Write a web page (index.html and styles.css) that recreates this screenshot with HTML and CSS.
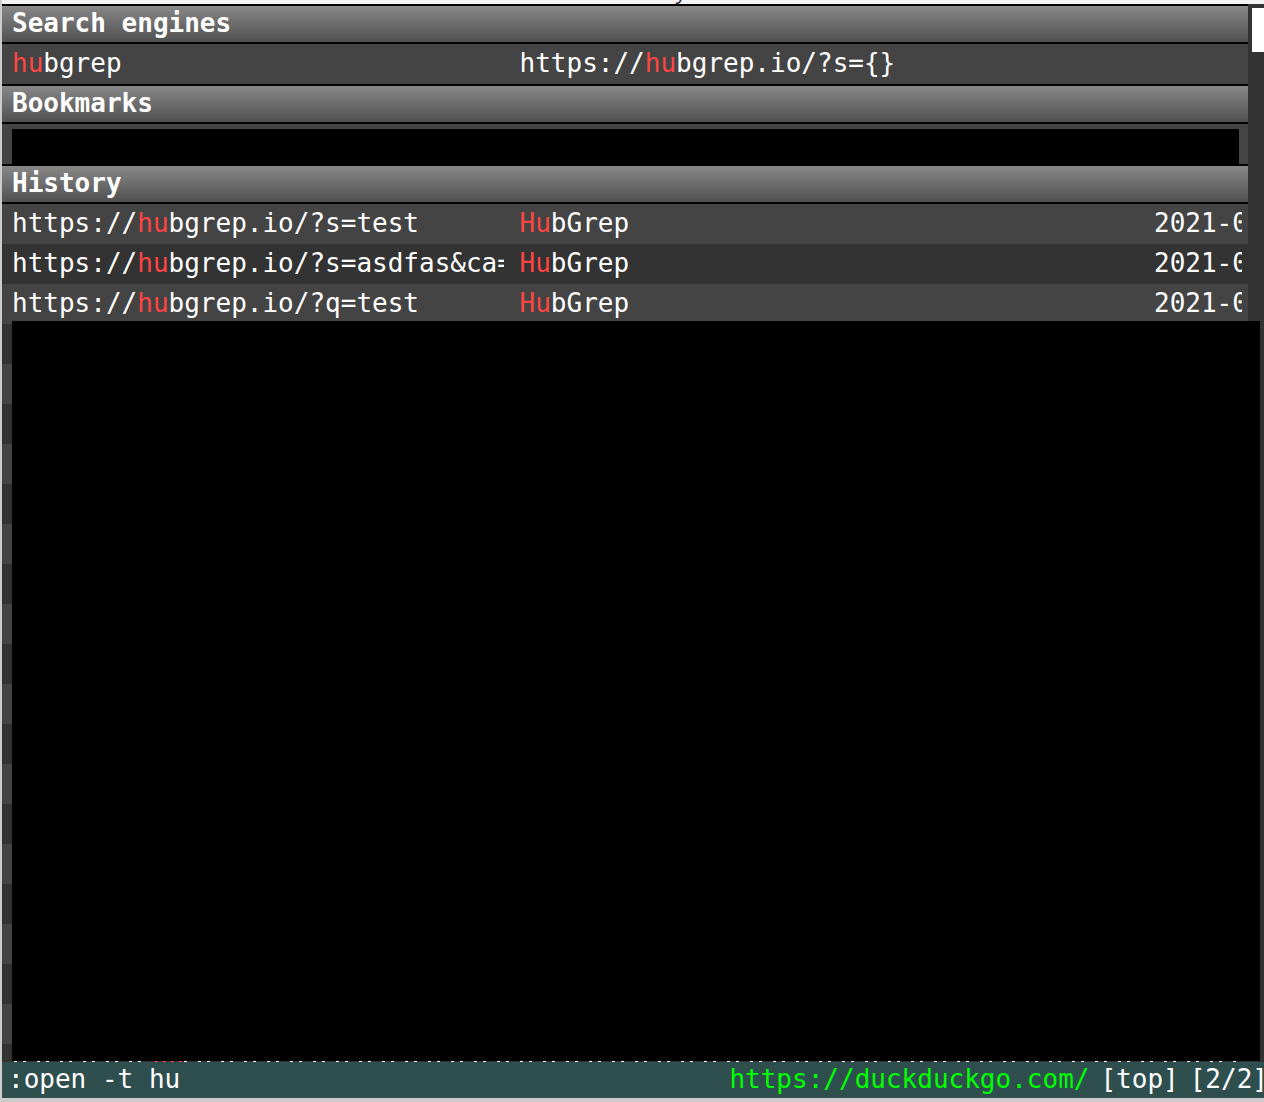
FILE: index.html
```html
<!DOCTYPE html>
<html lang="en">
<head>
<meta charset="utf-8">
<title>open -t hu</title>
<link rel="stylesheet" href="styles.css">
</head>
<body>
<div class="page-edge"><span>y</span></div>
<main class="completion">
  <div class="results">
    <table class="group">
      <thead><tr><th colspan="3">Search engines</th></tr></thead>
      <tbody>
        <tr><td><mark>hu</mark>bgrep</td><td>https://<mark>hu</mark>bgrep.io/?s={}</td><td></td></tr>
      </tbody>
    </table>
    <table class="group">
      <thead><tr><th colspan="3">Bookmarks</th></tr></thead>
      <tbody>
        <tr class="hidden-row"><td></td></tr>
      </tbody>
    </table>
    <table class="group">
      <thead><tr><th colspan="3">History</th></tr></thead>
      <tbody>
        <tr><td>https://<mark>hu</mark>bgrep.io/?s=test</td><td><mark>Hu</mark>bGrep</td><td>2021-0</td></tr>
        <tr><td>https://<mark>hu</mark>bgrep.io/?s=asdfas&amp;ca=</td><td><mark>Hu</mark>bGrep</td><td>2021-0</td></tr>
        <tr><td>https://<mark>hu</mark>bgrep.io/?q=test</td><td><mark>Hu</mark>bGrep</td><td>2021-0</td></tr>
      </tbody>
    </table>
    <div class="stripes"></div>
  </div>
  <div class="scrollbar"><div class="thumb"></div></div>
  <div class="cover"></div>
</main>
<footer class="statusbar">
  <input class="command" type="text" value=":open -t hu" aria-label="Command">
  <a class="url" href="https://duckduckgo.com/">https://duckduckgo.com/</a>
  <span>[top]</span>
  <span class="tabs">[2/2]</span>
</footer>
</body>
</html>
```
FILE: styles.css
```css
* { box-sizing: border-box; }

body {
  margin: 0;
  height: 100vh;
  overflow: hidden;
  display: flex;
  flex-direction: column;
  border-left: 2px solid #ccc;
  border-bottom: 4px solid #ccc;
  background: #333;
  color: #fff;
  font: 26px/36px "DejaVu Sans Mono", monospace;
}

/* Last pixels of the web page behind the completion list */
.page-edge {
  flex: none;
  height: 4px;
  overflow: hidden;
  display: flex;
  flex-direction: column;
  justify-content: flex-end;
  align-items: center;
  padding-left: 96px;
  background: #f2f2f2;
  color: #333344;
  font: 22px/28px "Open Sans", sans-serif;
}

.completion {
  position: relative;
  flex: 1;
  min-height: 0;
  display: flex;
}

.results {
  flex: 1;
  min-width: 0;
  display: flex;
  flex-direction: column;
}

.group,
.group thead,
.group tbody { display: block; }

.group tr {
  display: grid;
  grid-template-columns: minmax(0, 4fr) minmax(0, 5fr) 104px;
  height: 40px;
  background: #444;
}

.group tbody tr:nth-child(even) { background: #333; }

.group th {
  grid-column: 1 / -1;
  padding: 0 10px;
  border: solid #000;
  border-width: 2px 0;
  background: linear-gradient(#888, #505050);
  font-weight: bold;
  text-align: left;
  line-height: 34px;
}

.group td {
  padding: 0 0 0 10px;
  border-right: 6px solid transparent;
  overflow: hidden;
  white-space: nowrap;
  line-height: 38px;
}

mark {
  background: none;
  color: #f44;
}

.group .hidden-row { padding: 5px 9px 0 10px; }

.hidden-row td {
  grid-column: 1 / -1;
  padding: 0;
  border: 0;
  background: #000;
}

.stripes {
  flex: 1;
  background: repeating-linear-gradient(#333 0 40px, #444 40px 80px);
}

.scrollbar {
  flex: none;
  width: 16px;
  padding: 4px 0 0 4px;
  background: #333;
}

.thumb {
  height: 44px;
  background: #fff;
}

.cover {
  position: absolute;
  inset: 317px 4px 1px 10px;
  background: #000;
}

/* Sliver of the last row showing below the cover */
.cover::after {
  content: "";
  position: absolute;
  inset: 100% 18px -1px 0;
  background:
    repeating-linear-gradient(90deg, transparent 0 5px, #f44 5px 8px) 138px 0 / 32px 1px no-repeat,
    linear-gradient(#333, #333) 138px 0 / 32px 1px no-repeat,
    repeating-linear-gradient(90deg, transparent 0 2px, #fff 2px 5px, transparent 5px 11px, #fff 11px 14px, transparent 14px 23px);
}

.statusbar {
  flex: none;
  display: flex;
  gap: 11px;
  height: 36px;
  padding-left: 6px;
  background: #2f4f4f;
  line-height: 34px;
  white-space: nowrap;
}

.command {
  flex: 1;
  min-width: 0;
  height: 34px;
  padding: 0;
  border: 0;
  outline: 0;
  background: none;
  color: inherit;
  font: inherit;
}

.url {
  color: #0f0;
  text-decoration: none;
}

.tabs { margin-right: -4px; }
```
